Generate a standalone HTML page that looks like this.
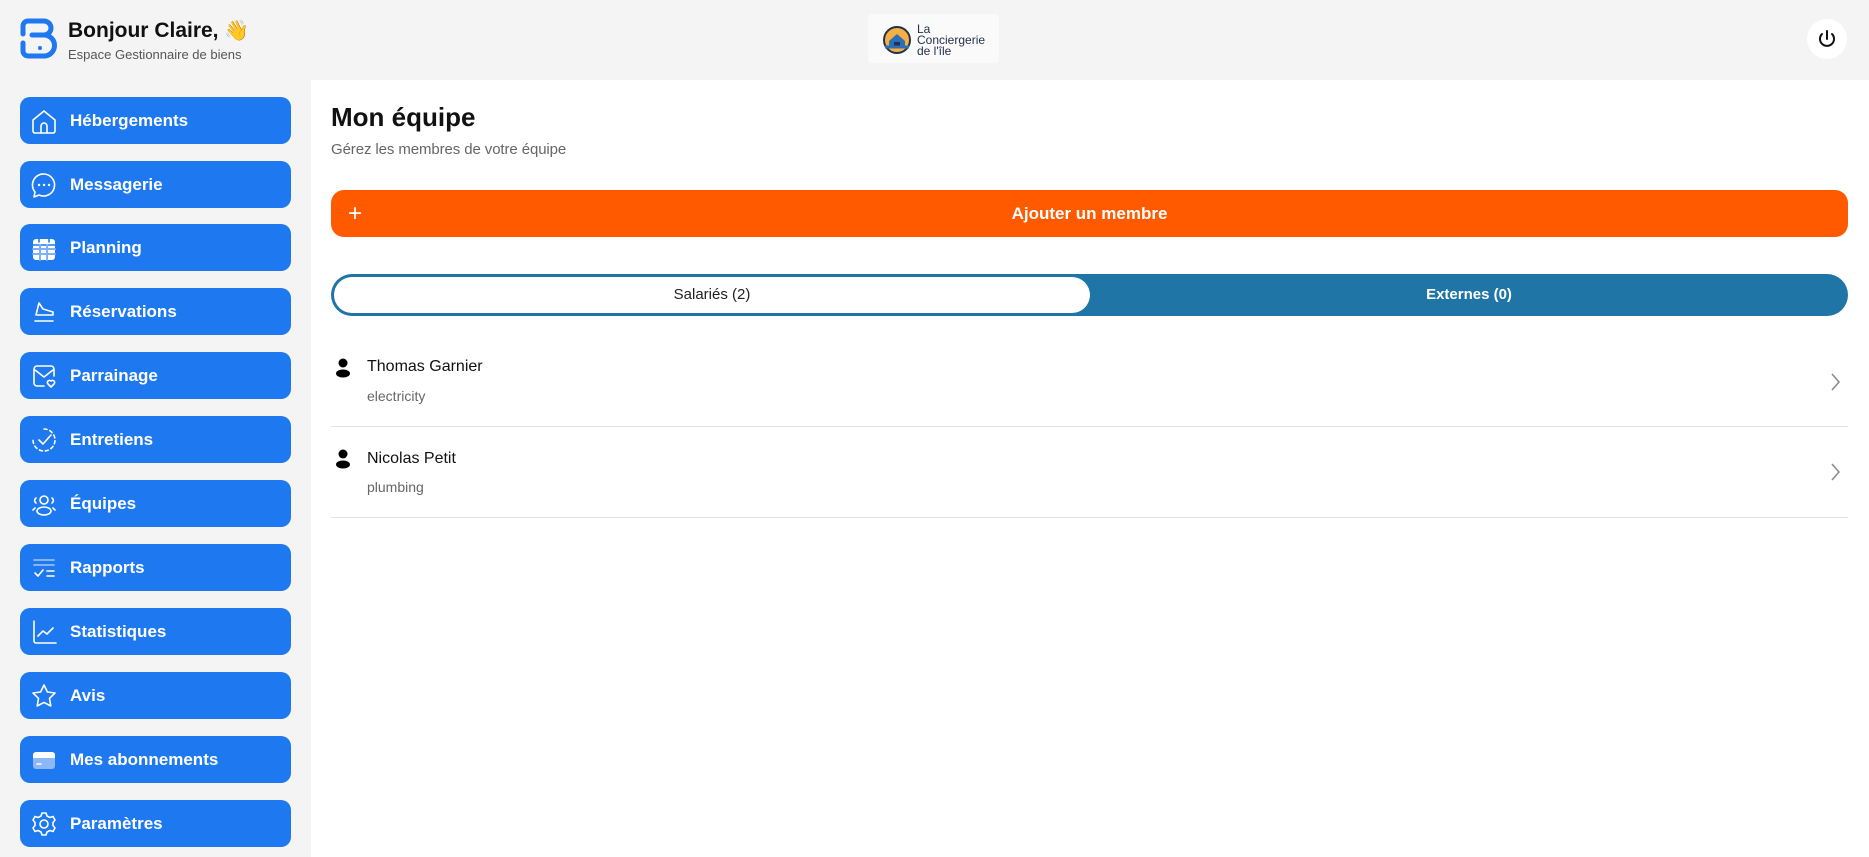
<!DOCTYPE html>
<html><head><meta charset="utf-8"><style>
*{box-sizing:border-box;margin:0;padding:0}
body{width:1869px;height:857px;background:#f4f4f4;font-family:"Liberation Sans",sans-serif;position:relative;overflow:hidden}
.abs{position:absolute}
.nav{position:absolute;left:20px;width:271px;height:47px;background:#1e78f0;border-radius:10px;color:#fff;font-weight:bold;font-size:17px;display:flex;align-items:center}
.nav svg{position:absolute;left:10px;top:10px;width:28px;height:28px;fill:none;stroke:#fff;stroke-width:1.6;stroke-linecap:round;stroke-linejoin:round}
.nav span{position:absolute;left:50px;top:14px}
.main{position:absolute;left:311px;top:80px;width:1558px;height:777px;background:#fff}
.row-name{position:absolute;left:367px;font-size:16px;color:#111}
.row-sub{position:absolute;left:367px;font-size:14px;color:#666}
.sep{position:absolute;left:331px;width:1517px;height:1px;background:#e2e2e2}
</style></head><body>
<svg class="abs" style="left:20px;top:18px" width="37" height="42" viewBox="0 0 37 42" fill="none" stroke="#1e78f0" stroke-width="5" stroke-linecap="round"><path d="M3 16V8a5 5 0 0 1 5-5h16a7 7 0 0 1 0 14H12"/><path d="M24 17a10 10 0 0 1 0 21H8a5 5 0 0 1-5-5v-8"/><circle cx="20" cy="30" r="1.5" fill="#1e78f0" stroke-width="1"/></svg>
<div class="abs" style="left:68px;top:18px;font-size:21px;font-weight:bold;color:#111">Bonjour Claire, <span style="font-size:20px">👋</span></div>
<div class="abs" style="left:68px;top:47px;font-size:13px;color:#555">Espace Gestionnaire de biens</div>
<div class="abs" style="left:868px;top:14px;width:131px;height:49px;background:#fafafa;border-radius:4px"></div>
<svg class="abs" style="left:883px;top:26px" width="28" height="28" viewBox="0 0 28 28"><circle cx="14" cy="14" r="13" fill="#f5b041" stroke="#23314a" stroke-width="2"/><path d="M6 15l8-7 8 7v6H6z" fill="#2b6fb8"/><rect x="11" y="16" width="6" height="6" fill="#23314a"/><path d="M2 21h24" stroke="#2b6fb8" stroke-width="3"/></svg>
<div class="abs" style="left:917px;top:24px;font-size:12px;line-height:11px;color:#23314a">La<br>Conciergerie<br>de l'île</div>
<div class="abs" style="left:1807px;top:19px;width:40px;height:40px;border-radius:50%;background:#fff"></div>
<svg class="abs" style="left:1816px;top:28px" width="22" height="22" viewBox="0 0 22 22" fill="none" stroke="#111" stroke-width="2" stroke-linecap="round"><path d="M11 3v8"/><path d="M6 6a7 7 0 1 0 10 0"/></svg>

<div class="nav" style="top:97px"><svg viewBox="0 0 28 28"><path d="M3 13L14 4l11 9v11a2 2 0 0 1-2 2H5a2 2 0 0 1-2-2z"/><path d="M11 26v-7a3 3 0 0 1 6 0v7"/></svg><span>Hébergements</span></div>
<div class="nav" style="top:161px"><svg viewBox="0 0 28 28"><path d="M14 3a11 11 0 1 1-5 21l-5 2 1-5A11 11 0 0 1 14 3z"/><path d="M9 14h.1M14 14h.1M19 14h.1" stroke-width="2.4"/></svg><span>Messagerie</span></div>
<div class="nav" style="top:224px"><svg viewBox="0 0 28 28"><rect x="3" y="5" width="22" height="21" rx="3" fill="#fff" stroke="none"/><path d="M3 11h22M9 3v5M19 3v5" stroke="#1e78f0"/><path d="M3 15h22M3 20h22M10 11v15M17 11v15" stroke="#7fb0f5" stroke-width="2"/></svg><span>Planning</span></div>
<div class="nav" style="top:288px"><svg viewBox="0 0 28 28"><path d="M5 23h18M6 17l3-12 4 6 10 3v3z"/></svg><span>Réservations</span></div>
<div class="nav" style="top:352px"><svg viewBox="0 0 28 28"><path d="M14 24H7a3 3 0 0 1-3-3V7a3 3 0 0 1 3-3h14a3 3 0 0 1 3 3v7"/><path d="M5 8l9 7 9-7"/><path d="M21 25l-3-3a2 2 0 0 1 3-3 2 2 0 0 1 3 3z"/></svg><span>Parrainage</span></div>
<div class="nav" style="top:416px"><svg viewBox="0 0 28 28"><path d="M14 3a11 11 0 1 1-11 11" stroke-dasharray="3 3"/><path d="M9 14l4 4 8-9"/></svg><span>Entretiens</span></div>
<div class="nav" style="top:480px"><svg viewBox="0 0 28 28"><circle cx="14" cy="10" r="4"/><ellipse cx="14" cy="21" rx="7" ry="4"/><path d="M6 8a3 3 0 0 0 0 5M22 8a3 3 0 0 1 0 5M3 20l2-2M25 20l-2-2"/></svg><span>Équipes</span></div>
<div class="nav" style="top:544px"><svg viewBox="0 0 28 28"><path d="M4 6h20M4 11h20" stroke="#a9c8f8"/><path d="M5 19l3 3 5-6M17 17h7M17 22h7"/></svg><span>Rapports</span></div>
<div class="nav" style="top:608px"><svg viewBox="0 0 28 28"><path d="M4 3v20a2 2 0 0 0 2 2h20"/><path d="M8 18l5-5 4 3 6-6"/></svg><span>Statistiques</span></div>
<div class="nav" style="top:672px"><svg viewBox="0 0 28 28"><path d="M14 3l3.4 7 7.6 1-5.5 5.3 1.3 7.7L14 20.4 7.2 24l1.3-7.7L3 11l7.6-1z"/></svg><span>Avis</span></div>
<div class="nav" style="top:736px"><svg viewBox="0 0 28 28"><rect x="3" y="6" width="22" height="17" rx="3" fill="#8cb8f7" stroke="none"/><path d="M3 9a3 3 0 0 1 3-3h16a3 3 0 0 1 3 3v3H3z" fill="#fff" stroke="none"/><path d="M7 18h4" stroke="#fff"/></svg><span>Mes abonnements</span></div>
<div class="nav" style="top:800px"><svg viewBox="0 0 28 28"><path d="M12 3h4l1 3 3 1.5 3-1 2 3.5-2 2.5v3l2 2.5-2 3.5-3-1-3 1.5-1 3h-4l-1-3-3-1.5-3 1-2-3.5 2-2.5v-3l-2-2.5 2-3.5 3 1 3-1.5z"/><circle cx="14" cy="14" r="4"/></svg><span>Paramètres</span></div>

<div class="main"></div>
<div class="abs" style="left:331px;top:102px;font-size:26px;font-weight:bold;color:#111">Mon équipe</div>
<div class="abs" style="left:331px;top:141px;font-size:15px;color:#666;letter-spacing:-0.1px">Gérez les membres de votre équipe</div>
<div class="abs" style="left:331px;top:190px;width:1517px;height:47px;background:#ff5a00;border-radius:13px;color:#fff;font-weight:bold;font-size:17px;text-align:center;line-height:47px">Ajouter un membre</div>
<div class="abs" style="left:348px;top:204px;color:#fff;font-size:24px;line-height:20px">+</div>
<div class="abs" style="left:331px;top:274px;width:1517px;height:42px;background:#1e75a6;border-radius:21px"></div>
<div class="abs" style="left:334px;top:277px;width:756px;height:36px;background:#fff;border-radius:18px;text-align:center;line-height:36px;font-size:15px;color:#222">Salariés (2)</div>
<div class="abs" style="left:1090px;top:274px;width:758px;height:42px;text-align:center;line-height:42px;font-size:15px;color:#fff;font-weight:bold">Externes (0)</div>

<svg class="abs" style="left:335px;top:358px" width="16" height="20" viewBox="0 0 16 20"><circle cx="8" cy="5" r="4.5"/><ellipse cx="8" cy="15.5" rx="7" ry="4"/></svg>
<div class="row-name" style="top:358px">Thomas Garnier</div>
<div class="row-sub" style="top:388px">electricity</div>
<svg class="abs" style="left:1829px;top:372px" width="12" height="20" viewBox="0 0 12 20" fill="none" stroke="#888" stroke-width="1.5"><path d="M3 2l7 8-7 8"/></svg>
<div class="sep" style="top:426px"></div>
<svg class="abs" style="left:335px;top:449px" width="16" height="20" viewBox="0 0 16 20"><circle cx="8" cy="5" r="4.5"/><ellipse cx="8" cy="15.5" rx="7" ry="4"/></svg>
<div class="row-name" style="top:450px">Nicolas Petit</div>
<div class="row-sub" style="top:479px">plumbing</div>
<svg class="abs" style="left:1829px;top:462px" width="12" height="20" viewBox="0 0 12 20" fill="none" stroke="#888" stroke-width="1.5"><path d="M3 2l7 8-7 8"/></svg>
<div class="sep" style="top:517px"></div>
</body></html>
